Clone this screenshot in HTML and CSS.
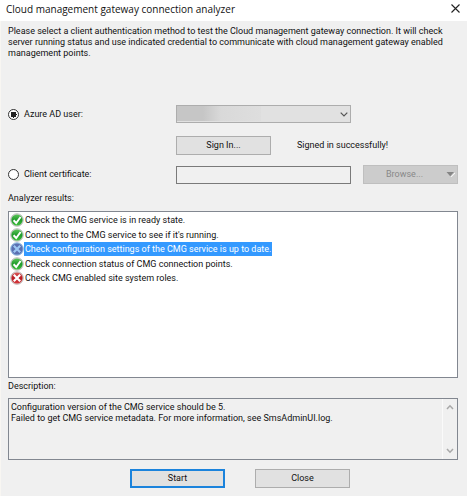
FILE: index.html
```html
<!DOCTYPE html>
<html lang="en">
<head>
    <meta charset="UTF-8">
    <meta name="viewport" content="width=device-width, initial-scale=1.0">
    <title>Cloud management gateway connection analyzer</title>
    <link rel="stylesheet" href="styles.css">
</head>
<body>
    <!-- Shared icons -->
    <svg class="icon-defs" width="0" height="0" aria-hidden="true">
        <defs>
            <linearGradient id="greenFill" x1="0" y1="0" x2="0" y2="1">
                <stop offset="0" stop-color="#5cc65a"/>
                <stop offset="0.5" stop-color="#1f9a2a"/>
                <stop offset="1" stop-color="#3fc03c"/>
            </linearGradient>
            <linearGradient id="redFill" x1="0" y1="0" x2="0" y2="1">
                <stop offset="0" stop-color="#dc5b5b"/>
                <stop offset="0.5" stop-color="#b91a22"/>
                <stop offset="1" stop-color="#d83a3e"/>
            </linearGradient>
        </defs>
        <symbol id="ok" viewBox="0 0 14 14">
            <circle cx="7" cy="7" r="6.3" fill="#d5d8d5" stroke="#a3aaa3" stroke-width="0.7"/>
            <circle cx="7" cy="7" r="5.6" fill="url(#greenFill)"/>
            <path d="M3.6 7.2l2.6 2.8L10.6 4" fill="none" stroke="#fff" stroke-width="2"/>
        </symbol>
        <symbol id="fail" viewBox="0 0 14 14">
            <circle cx="7" cy="7" r="6.3" fill="#dcd6d6" stroke="#aaa0a0" stroke-width="0.7"/>
            <circle cx="7" cy="7" r="5.6" fill="url(#redFill)"/>
            <path d="M3.8 3.8l6.4 6.4M10.2 3.8L3.8 10.2" fill="none" stroke="#fff" stroke-width="2.2"/>
        </symbol>
        <symbol id="failSelected" viewBox="0 0 14 14">
            <circle cx="7" cy="7" r="6.3" fill="#8fb6e2" stroke="#6f9bd0" stroke-width="0.7"/>
            <circle cx="7" cy="7" r="5.6" fill="#5b6fb0"/>
            <path d="M3.8 3.8l6.4 6.4M10.2 3.8L3.8 10.2" fill="none" stroke="#9cc6f3" stroke-width="2.2"/>
        </symbol>
    </svg>

    <header class="titlebar">
        <h1>Cloud management gateway connection analyzer</h1>
        <button class="close-x" type="button" aria-label="Close window">
            <svg width="9" height="9" viewBox="0 0 9 9"><path d="M0.5 0.5l8 8M8.5 0.5l-8 8" fill="none" stroke="#222" stroke-width="1.1"/></svg>
        </button>
    </header>

    <main class="dialog">
        <p class="intro">Please select a client authentication method to test the Cloud management gateway connection. It will check server running status and use indicated credential to communicate with cloud management gateway enabled management points.</p>

        <form class="auth">
            <label class="choice"><input type="radio" name="auth" checked>Azure AD user:</label>
            <div class="combo">
                <select aria-label="Azure AD user">
                    <option></option>
                </select>
                <span class="redacted"></span>
                <svg class="chevron" width="8" height="5" viewBox="0 0 8 5"><path d="M0.7 0.7L4 4l3.3-3.3" fill="none" stroke="#555" stroke-width="1.2"/></svg>
            </div>

            <div class="sign-in">
                <button class="btn" type="button">Sign In...</button>
                <span class="status">Signed in successfully!</span>
            </div>

            <label class="choice"><input type="radio" name="auth">Client certificate:</label>
            <input class="cert" type="text" aria-label="Client certificate path">
            <button class="btn browse" type="button" disabled>
                <span>Browse...</span>
                <svg width="9" height="5" viewBox="0 0 9 5"><path d="M4.5 5L9 0.5V1.5L5.5 5z" fill="#fff"/><path d="M0.5 0h7.5L4.2 4.2z" fill="#858585"/></svg>
            </button>
        </form>

        <h2 id="resultsLabel">Analyzer results:</h2>
        <div class="results">
            <ul role="listbox" aria-labelledby="resultsLabel">
                <li role="option"><svg><use href="#ok"/></svg><span>Check the CMG service is in ready state.</span></li>
                <li role="option"><svg><use href="#ok"/></svg><span>Connect to the CMG service to see if it's running.</span></li>
                <li role="option" class="selected" aria-selected="true"><svg><use href="#failSelected"/></svg><span>Check configuration settings of the CMG service is up to date.</span></li>
                <li role="option"><svg><use href="#ok"/></svg><span>Check connection status of CMG connection points.</span></li>
                <li role="option"><svg><use href="#fail"/></svg><span>Check CMG enabled site system roles.</span></li>
            </ul>
        </div>

        <label class="desc-label" for="description">Description:</label>
        <div class="description">
            <textarea id="description" readonly>Configuration version of the CMG service should be 5.
Failed to get CMG service metadata. For more information, see SmsAdminUI.log.</textarea>
            <div class="scroll" aria-hidden="true">
                <svg width="8" height="6" viewBox="0 0 8 6"><path d="M1 5l3-3.2L7 5" fill="none" stroke="#a8a8a8" stroke-width="1.5"/></svg>
                <svg width="8" height="6" viewBox="0 0 8 6"><path d="M1 1l3 3.2L7 1" fill="none" stroke="#a8a8a8" stroke-width="1.5"/></svg>
            </div>
        </div>

        <footer class="actions">
            <button class="btn primary" type="button">Start</button>
            <button class="btn" type="button">Close</button>
        </footer>
    </main>
</body>
</html>
```

FILE: styles.css
```css
* {
    box-sizing: border-box;
    margin: 0;
    padding: 0;
}

body {
    min-height: 100vh;
    background: #f0f0f0;
    color: #111;
    font: 9px/11px Roboto, "Liberation Sans", sans-serif;
}

button, input, select, textarea {
    font: inherit;
    color: inherit;
    border-radius: 0;
}

.icon-defs {
    position: absolute;
}

/* Title bar */
.titlebar {
    display: flex;
    align-items: center;
    justify-content: space-between;
    height: 21px;
    padding: 0 7px 4px 6px;
    background: #fff;
}

.titlebar h1 {
    font: 10px/16px "Open Sans", "Noto Sans", sans-serif;
}

.close-x {
    display: flex;
    border: 0;
    background: none;
}

/* Dialog body */
.dialog {
    padding: 5px 9px 8px 7px;
    border-left: 1px solid #f8f6f2;
}

.intro {
    padding-right: 4px;
    min-height: 33px;
}

/* Authentication method */
.auth {
    display: grid;
    grid-template-columns: 156px 1fr 95px;
    column-gap: 12px;
    align-items: center;
    margin-top: 46px;
}

.choice {
    display: flex;
    align-items: center;
    gap: 5px;
}

.choice input {
    appearance: none;
    width: 11px;
    height: 11px;
    border: 1px solid #333;
    border-radius: 50%;
    background: #fff;
}

.choice input:checked {
    background: radial-gradient(circle, #222 0 3px, #fff 3px);
}

.combo {
    position: relative;
    height: 18px;
}

.combo select {
    appearance: none;
    display: block;
    width: 100%;
    height: 18px;
    border: 1px solid #adadad;
    background: #e1e1e1;
}

.redacted {
    position: absolute;
    top: 1px;
    left: 1px;
    width: 84px;
    height: 15px;
    background: linear-gradient(90deg, #c6c6c6 0 26px, #d9d9d9 44px, #dedede);
}

.chevron {
    position: absolute;
    top: 7px;
    right: 3px;
}

.sign-in {
    grid-column: 2 / -1;
    display: flex;
    align-items: center;
    gap: 26px;
    margin: 13px 0 10px;
}

.cert {
    width: 100%;
    height: 18px;
    border: 1px solid #7a7a7a;
    background: #f0f0f0;
}

/* Buttons */
.btn {
    width: 95px;
    height: 19px;
    border: 1px solid #adadad;
    background: #e1e1e1;
}

.btn.primary {
    border: 2px solid #1b83dc;
}

.btn.browse {
    display: flex;
    align-items: center;
    padding: 0 2px 0 22px;
    border-color: #bfbfbf;
    background: #ccc;
    color: #888;
}

.browse span {
    flex: 1;
    text-align: left;
}

/* Results list */
h2 {
    margin-top: 9px;
    font-size: 9px;
    font-weight: normal;
}

.results {
    height: 167px;
    margin-top: 7px;
    padding: 1px;
    border: 1px solid #828790;
    background: #fff;
}

.results ul {
    display: flex;
    flex-direction: column;
    justify-content: space-between;
    height: 72px;
    list-style: none;
}

.results li {
    display: flex;
    align-items: center;
    height: 14px;
}

.results svg {
    width: 14px;
    height: 14px;
}

.results span {
    padding: 0 1px;
    line-height: 14px;
}

.results .selected span {
    background: #3399ff;
    color: #fff;
}

/* Description */
.desc-label {
    display: block;
    margin-top: 3px;
}

.description {
    display: flex;
    height: 62px;
    margin-top: 6px;
    border: 1px solid #828790;
}

.description textarea {
    flex: 1;
    padding: 3px 2px;
    border: 0;
    outline: 0;
    background: transparent;
    resize: none;
    overflow: hidden;
}

.scroll {
    display: flex;
    flex-direction: column;
    justify-content: space-between;
    align-items: center;
    width: 15px;
    padding: 5px 0;
    border-left: 1px solid #fafafa;
}

/* Bottom buttons */
.actions {
    display: flex;
    justify-content: center;
    gap: 30px;
    margin-top: 9px;
    padding-left: 14px;
}
```
